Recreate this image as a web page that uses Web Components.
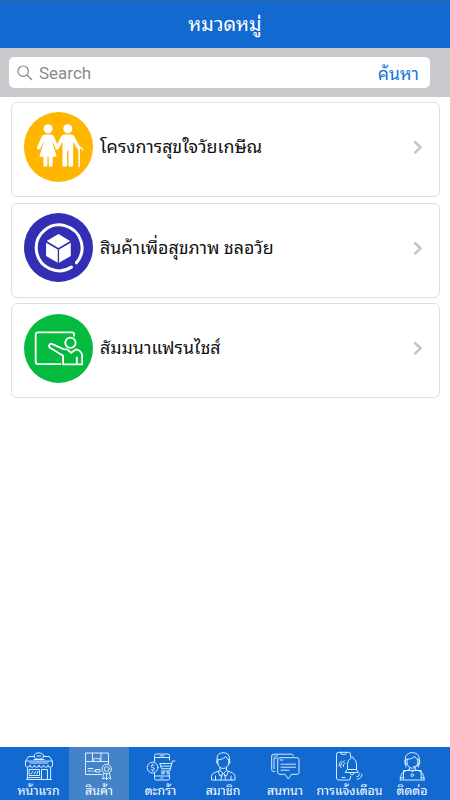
<!DOCTYPE html>
<html lang="th">
<head>
  <meta charset="utf-8">
  <meta name="viewport" content="width=device-width, initial-scale=1">
  <title>หมวดหมู่</title>
  <style>
    body {
      margin: 0;
      background: #fff;
      font-family: Roboto, "Noto Sans Thai Looped", "Noto Looped Thai", "Droid Sans Thai", Loma, Garuda, Waree, "Noto Sans Thai", sans-serif;
    }
  </style>
</head>
<body>
  <category-page></category-page>

  <script>
    const categoryIcons = {
      elderly: /* html */`
        <g fill="#fff" stroke="none">
          <circle cx="72" cy="50" r="13.5"/>
          <circle cx="131" cy="50" r="13.5"/>
          <path d="M62 67h20q5 0 7 5l15 34q1 5-3 6-4 1-6-3L83 84l15 50H86v25q0 5-6 5t-6-5v-25h-4v25q0 5-6 5t-6-5v-25H46l15-50-12 25q-3 5-7 3-5-2-3-7l15-33q3-5 8-5z"/>
          <path d="M121 67h20q6 0 9 5l18 33q2 6-2 8-4 1-7-3l-12-21v70q0 5-7 5t-7-5v-43h-4v43q0 5-7 5t-7-5V89l-11 20q-3 4-7 3-4-2-2-7l17-33q3-5 9-5z"/>
        </g>
        <path d="M165 163v-56q9-2 10 6" stroke-width="4.5"/>`,
      product: /* html */`
        <path d="M142 162A68.5 68.5 0 1 1 157 149" stroke-width="9"/>
        <path d="M103 63l35 21-35 21-35-21zM66 89l35 20v40l-35-20zM140 89l-35 20v40l35-20z" fill="#fff" stroke="none"/>`,
      seminar: /* html */`
        <path d="M150 65v-3q0-7-7-7H42q-7 0-7 7v81q0 7 7 7h67" stroke-width="5.5"/>
        <circle cx="139" cy="86" r="15.5" stroke-width="5.5"/>
        <path d="M117 151v-26l-39-24q-5-4-2-9 3-5 9-2l33 15 11 1 12 10 14-10q15 2 19 16v29zM158 130v20" stroke-width="5.5"/>`
    }

    const tabIcons = {
      home: /* html */`
        <path d="M1.5 10.5v3.5a2.2 2.2 0 0 0 4.5 0 2.2 2.2 0 0 0 4.5 0 2.2 2.2 0 0 0 4.5 0 2.2 2.2 0 0 0 4.5 0 2.2 2.2 0 0 0 4.5 0 2.2 2.2 0 0 0 4.5 0v-3.5zM1.5 10.5l3-5h5.8M19.7 5.5h5.8l3 5M3.4 17v11.5h23.2V17M2.5 28.5h25M5.5 18.5h10v6h-10zM17.5 28V18.5h6V28M4 26.5h12"/>
        <ellipse cx="15" cy="5" rx="4.8" ry="3.2"/>
        <path d="M13 5h4M10 8.5h10M7 23l2-2.7M10 23l2-2.7M13 23l1-2.7M6 12h18"/>`,
      product: /* html */`
        <path d="M18 23.5H1.5V2h23v11.5M1.5 10.5h23M8.5 2v8.5M17 2v8.5M9.5 10.5V8l1.2-.8L12 8l1.2-.8L14.5 8l1.5-.8v3.3M4 17.5h5M4 20h3M9 20h3M12 18.5h4v2.5h-4z"/>
        <circle cx="22.7" cy="18" r="4.8"/>
        <circle cx="22.7" cy="18" r="2.5"/>
        <path d="M20 22l-1.5 6 2.5-1.2 1.5 1.7v-5.5M25.3 22l1.5 6-2.4-1.2-1.9 1.7"/>`,
      cart: /* html */`
        <path d="M8.5 11V4.5q0-1.5 1.5-1.5h12q1.5 0 1.5 1.5V9M8.5 22v5.5q0 1.5 1.5 1.5h12q1.5 0 1.5-1.5V24M8.5 6.5h15M8.5 25h15M14 4.8h4M15 27h2"/>
        <circle cx="6.6" cy="16.6" r="5.4"/>
        <path d="M8.2 14.8q-.6-.8-1.6-.8-1.5.1-1.5 1.3t1.6 1.3 1.6 1.4-1.5 1.3-1.9-.8M6.6 13.2v.8M6.6 19.3v.8M29 10h-2.6l-2.6 10h-8.3M25.7 12.5H13.8l1.7 5.2h8.9M15 15.1h10"/>
        <circle cx="16.8" cy="22" r="1.2"/>
        <circle cx="22.2" cy="22" r="1.2"/>`,
      member: /* html */`
        <path d="M9 11V7.5Q9 2 15 1.7 21.5 1.5 21.5 8V11M9.8 9q5-.2 8-3.5 1 2.5 3 3.5M9.8 8v4q.5 5 5.4 5.5 5-.5 5.6-5.5V8M9.8 9.5q-2 .3-1 2.7l1.3.8M20.8 9.5q2 .3 1 2.7l-1.3.8M12 16.5v3L5.8 22q-2.3 1-2.3 3.5V29h23.5v-3.5q0-2.5-2.3-3.5l-6.2-2.5v-3M11.8 19.5l3.5 3 3.3-3M10 20.2l2 5 3.3-2.7 3.2 2.7 2-5M14.3 23l-1.5 6M16.3 23l1.5 6M7.5 25v4M23 25v4"/>`,
      chat: /* html */`
        <path d="M5 20.5H3.5Q1.7 20.5 1.7 18.7V5q0-1.8 1.8-1.8h18q1.8 0 1.8 1.8M4 18V7h3M4 5h1M6.5 5h1"/>
        <path d="M7.7 8.5q0-1.8 1.8-1.8h17.7Q29 6.7 29 8.5v13q0 1.8-1.8 1.8H21.5l-3.2 4.7-3.2-4.7H9.5q-1.8 0-1.8-1.8zM11 13.2h2M14 13.2h11.5M11 16.2h14.5M11 19.2h8M10 9h3"/>`,
      bell: /* html */`
        <path d="M15.5 5.5V3.2q0-1.9-1.9-1.9H3.4q-1.9 0-1.9 1.9V27q0 2 1.9 2h10.2q1.9 0 1.9-2v-1.5M5.5 1.5l.8 1.8h4.4l.8-1.8M7 26.5h3"/>
        <path d="M12.5 18.5V13q0-4.3 3.2-5.2V6.5q1.3-1.5 2.6 0v1.3q3.2.9 3.2 5.2v5.5M12.5 18.5h9l2 3h-13zM15 21.5q0 2.3 2 2.3t2-2.3M6 16.5q-2-3.5 3.5-6.5M8.300 15.500q-1-2 1.600-3.500M3.800 15q0-3 2.500-5M21.800 26q2.700-.5 2.700-3M22.300 28.300q4.700-.8 4.700-5.300"/>`,
      contact: /* html */`
        <path d="M9 16q-2-10 1-12.5 5.3-4 10.6 0Q23.5 6 21.5 16M9.8 8.5q4.5 0 8-3 1 2.5 3.2 3M10 8v4q1 5 5.3 5.2Q20 17 20.8 12V8M9 9H8v4h2M21.7 9h1v4h-2M21.7 13q-.5 2.5-5 2.5M12.5 16.5v2L8 20.2q-4.5 1.5-4.5 8.3M18.2 16.5v2l4.3 1.7q4.5 1.5 4.5 8.3M6.5 28v-8.5h17.7V28M3 29h24.5M12.5 19l2.8 1.5 2.8-1.5"/>
        <circle cx="15.3" cy="24.2" r="1.3"/>
        <path d="M3 26.8h3.5M24.2 26.8h3"/>`
    }

    class PageHeader extends HTMLElement {
      constructor () {
        super()
        this.shadow = this.attachShadow({ mode: 'open' })
      }

      connectedCallback () {
        this.shadow.innerHTML =
          /* html */`
          <style>
            :host {
              box-sizing: border-box;
              height: 48px;
              display: flex;
              justify-content: center;
              align-items: center;
              background-color: #1269d0;
              border-top: 1px solid #2d659f;
              color: #fff;
            }
            h1 {
              margin: 0;
              font-size: 19.8px;
              line-height: 30px;
              font-weight: 400;
            }
          </style>
          <h1><slot></slot></h1>
          `
      }
    }

    class SearchBar extends HTMLElement {
      constructor () {
        super()
        this.shadow = this.attachShadow({ mode: 'open' })
      }

      connectedCallback () {
        this.shadow.innerHTML =
          /* html */`
          <style>
            :host {
              box-sizing: border-box;
              height: 49px;
              display: block;
              padding: 9px 20px 9px 9px;
              background-color: #c9c9ce;
            }
            .field {
              box-sizing: border-box;
              height: 31px;
              display: flex;
              align-items: center;
              padding: 0 11px 0 8px;
              background-color: #fff;
              border-radius: 5px;
            }
            svg {
              width: 16px;
              height: 16px;
              margin-right: 6px;
            }
            .placeholder {
              flex: 1;
              color: #8a8a8a;
              font-size: 17px;
              line-height: 20px;
            }
            .action {
              padding-top: 2px;
              color: #0f76dc;
              font-size: 17.6px;
              line-height: 26px;
            }
          </style>
          <div class="field">
            <svg viewBox="0 0 16 16" fill="none" stroke="#858585" stroke-width="1.2">
              <circle cx="6.2" cy="6.2" r="5.2"/>
              <path d="M10 10l5 5"/>
            </svg>
            <span class="placeholder">Search</span>
            <span class="action"><slot></slot></span>
          </div>
          `
      }
    }

    class CategoryCard extends HTMLElement {
      constructor () {
        super()
        this.shadow = this.attachShadow({ mode: 'open' })
      }

      connectedCallback () {
        this.shadow.innerHTML =
          /* html */`
          <style>
            :host {
              box-sizing: border-box;
              height: 95px;
              display: flex;
              align-items: center;
              padding: 0 15px 5px 11.5px;
              border: 1px solid #dfdfdf;
              border-radius: 6px;
              color: #111;
            }
            .icon {
              width: 69.5px;
              height: 69.5px;
              flex: none;
              background-color: ${this.getAttribute('color')};
              border-radius: 50%;
            }
            .name {
              flex: 1;
              margin-left: 7px;
              font-size: 17.8px;
              line-height: 28px;
              white-space: nowrap;
            }
            .arrow {
              width: 12px;
              height: 16px;
            }
          </style>
          <svg class="icon" viewBox="0 0 208 208" fill="none" stroke="#fff" stroke-linecap="round" stroke-linejoin="round">
            ${categoryIcons[this.getAttribute('icon')]}
          </svg>
          <span class="name"><slot></slot></span>
          <svg class="arrow" viewBox="0 0 12 16" fill="none" stroke="#c3c3c5" stroke-width="2.5">
            <path d="M2.5 2.5L8.5 8.3 2.5 14.1"/>
          </svg>
          `
      }
    }

    class TabItem extends HTMLElement {
      constructor () {
        super()
        this.shadow = this.attachShadow({ mode: 'open' })
      }

      connectedCallback () {
        this.shadow.innerHTML =
          /* html */`
          <style>
            :host {
              box-sizing: border-box;
              display: flex;
              flex-direction: column;
              align-items: center;
              padding-top: 4px;
              color: #fff;
            }
            :host([active]) {
              background-color: #4583c9;
            }
            svg {
              width: 30px;
              height: 30px;
              flex: none;
            }
            span {
              margin-top: 1px;
              font-size: 12.4px;
              line-height: 18px;
              white-space: nowrap;
            }
          </style>
          <svg viewBox="0 0 30 30" fill="none" stroke="#d5edff" stroke-linecap="round" stroke-linejoin="round">
            ${tabIcons[this.getAttribute('icon')]}
          </svg>
          <span><slot></slot></span>
          `
      }
    }

    class TabBar extends HTMLElement {
      constructor () {
        super()
        this.shadow = this.attachShadow({ mode: 'open' })
      }

      connectedCallback () {
        this.shadow.innerHTML =
          /* html */`
          <style>
            :host {
              box-sizing: border-box;
              height: 53px;
              display: grid;
              grid-template-columns: 61px 60px 63px 62px 62px 67px 58px;
              padding: 0 9px 0 8px;
              background-color: #1269d0;
            }
          </style>
          <slot></slot>
          `
      }
    }

    class CategoryPage extends HTMLElement {
      constructor () {
        super()
        this.shadow = this.attachShadow({ mode: 'open' })
      }

      connectedCallback () {
        this.categories = [
          { name: 'โครงการสุขใจวัยเกษีณ', icon: 'elderly', color: '#ffb600' },
          { name: 'สินค้าเพื่อสุขภาพ ชลอวัย', icon: 'product', color: '#322fb4' },
          { name: 'สัมมนาแฟรนไชส์', icon: 'seminar', color: '#04bb40' }
        ]
        this.tabs = [
          { name: 'หน้าแรก', icon: 'home' },
          { name: 'สินค้า', icon: 'product', active: true },
          { name: 'ตะกร้า', icon: 'cart' },
          { name: 'สมาชิก', icon: 'member' },
          { name: 'สนทนา', icon: 'chat' },
          { name: 'การแจ้งเตือน', icon: 'bell' },
          { name: 'ติดต่อ', icon: 'contact' }
        ]
        this.render()
      }

      render () {
        this.shadow.innerHTML =
          /* html */`
          <style>
            :host {
              height: 100vh;
              display: flex;
              flex-direction: column;
              overflow: hidden;
            }
            main {
              flex: 1;
              display: flex;
              flex-direction: column;
              gap: 5.7px;
              padding: 5px 10px 0 11px;
            }
          </style>
          <page-header>หมวดหมู่</page-header>
          <search-bar>ค้นหา</search-bar>
          <main>
            ${this.categories.map(category => `<category-card icon="${category.icon}" color="${category.color}">${category.name}</category-card>`).join('')}
          </main>
          <tab-bar>
            ${this.tabs.map(tab => `<tab-item icon="${tab.icon}" ${tab.active ? 'active' : ''}>${tab.name}</tab-item>`).join('')}
          </tab-bar>
          `
      }
    }

    customElements.define('page-header', PageHeader)
    customElements.define('search-bar', SearchBar)
    customElements.define('category-card', CategoryCard)
    customElements.define('tab-item', TabItem)
    customElements.define('tab-bar', TabBar)
    customElements.define('category-page', CategoryPage)
  </script>
</body>
</html>
